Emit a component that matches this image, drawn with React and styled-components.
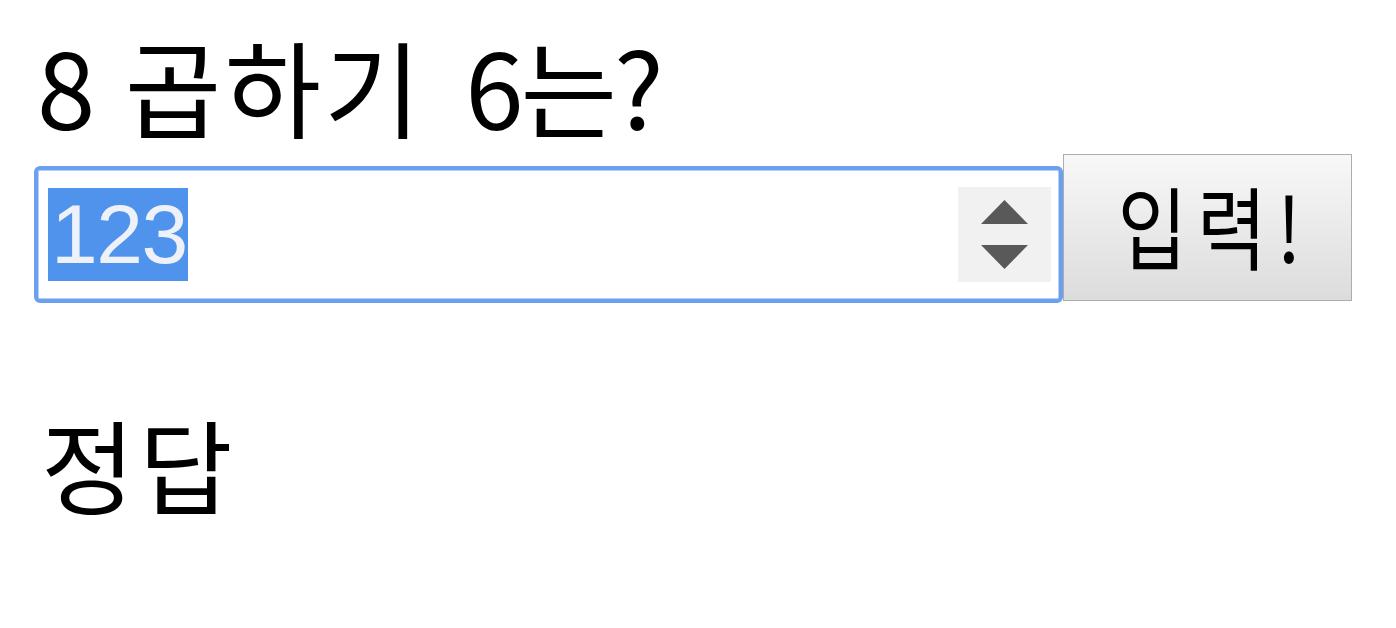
import React from 'react';
import styled, { createGlobalStyle } from 'styled-components';

const Global = createGlobalStyle`
  html, body { margin: 0; padding: 0; background: #fff; }
  body {
    font-family: "Noto Sans CJK KR", "Noto Sans", sans-serif;
    color: #000;
    overflow: hidden;
  }
`;

const Page = styled.div`
  width: 1396px;
  height: 628px;
  box-sizing: border-box;
  padding-left: 34px;
  display: flex;
  flex-direction: column;
`;

const Heading = styled.h1`
  margin: ${(p) => p.$margin};
  font-size: ${(p) => p.$size}px;
  font-weight: 400;
  line-height: 1;
  height: ${(p) => p.$size}px;
  letter-spacing: ${(p) => p.$spacing};
  white-space: nowrap;
`;

const Word = styled.span`
  margin-left: ${(p) => p.$shift || '0px'};
  letter-spacing: ${(p) => p.$spacing || 'inherit'};
`;

const Squeeze = styled.span`
  display: inline-block;
  transform: scaleX(${(p) => p.$x});
  transform-origin: center;
  letter-spacing: ${(p) => p.$spacing};
`;

const Row = styled.form`
  margin-top: 17px;
  display: flex;
  align-items: flex-end;
  height: 148px;
`;

const Field = styled.div`
  box-sizing: border-box;
  width: 1029px;
  height: 137px;
  margin-bottom: -1px;
  border: 4px solid #6aa0ee;
  box-shadow: inset 0 0 0 1px #b4cff5;
  border-radius: 6px;
  background: #fff;
  display: flex;
  align-items: center;
  padding: 0 8px 0 10px;
`;

const Selected = styled.span`
  display: inline-block;
  height: 93px;
  line-height: 93px;
  background: #4f93ec;
  color: #eef2f8;
  font-family: "Liberation Sans", Arial, sans-serif;
  font-size: 84px;
  letter-spacing: -1.5px;
  padding: 0 1px 0 3px;
`;

const Spacer = styled.div`
  flex: 1;
`;

const Spinner = styled.div`
  width: 93px;
  height: 95px;
  background: #f1f1f1;
  display: flex;
  flex-direction: column;
  align-items: center;
  justify-content: center;
  gap: 21px;
`;

const Arrow = styled.svg`
  display: block;
  width: 47px;
  height: 24px;
`;

const Button = styled.button`
  box-sizing: border-box;
  width: 289px;
  height: 147px;
  margin: 0 0 1px;
  border: 1px solid #adadad;
  border-radius: 0;
  background: linear-gradient(#f8f8f8, #dcdcdc);
  padding: 0 0 8px 14px;
  font-family: "Noto Sans CJK KR", "Noto Sans", sans-serif;
  font-size: 90px;
  line-height: 1;
  color: #000;
  display: flex;
  align-items: center;
  justify-content: center;
`;

export default function App() {
  return (
    <>
      <Global />
      <Page>
        <Heading $size={105} $margin="32px 0 0 3px" $spacing="3px">
          8 곱하기 <Word $shift="15px" $spacing="-3px">6는?</Word>
        </Heading>
        <Row onSubmit={(e) => e.preventDefault()}>
          <Field>
            <Selected>123</Selected>
            <Spacer />
            <Spinner>
              <Arrow viewBox="0 0 47 24">
                <polygon points="23.5,0 47,24 0,24" fill="#595959" />
              </Arrow>
              <Arrow viewBox="0 0 47 24">
                <polygon points="0,0 47,0 23.5,24" fill="#595959" />
              </Arrow>
            </Spinner>
          </Field>
          <Button type="submit">
            <Squeeze $x={0.84} $spacing="12px">입력!</Squeeze>
          </Button>
        </Row>
        <Heading as="h2" $size={102} $margin="110px 0 0 7px" $spacing="4px">
          정답
        </Heading>
      </Page>
    </>
  );
}
